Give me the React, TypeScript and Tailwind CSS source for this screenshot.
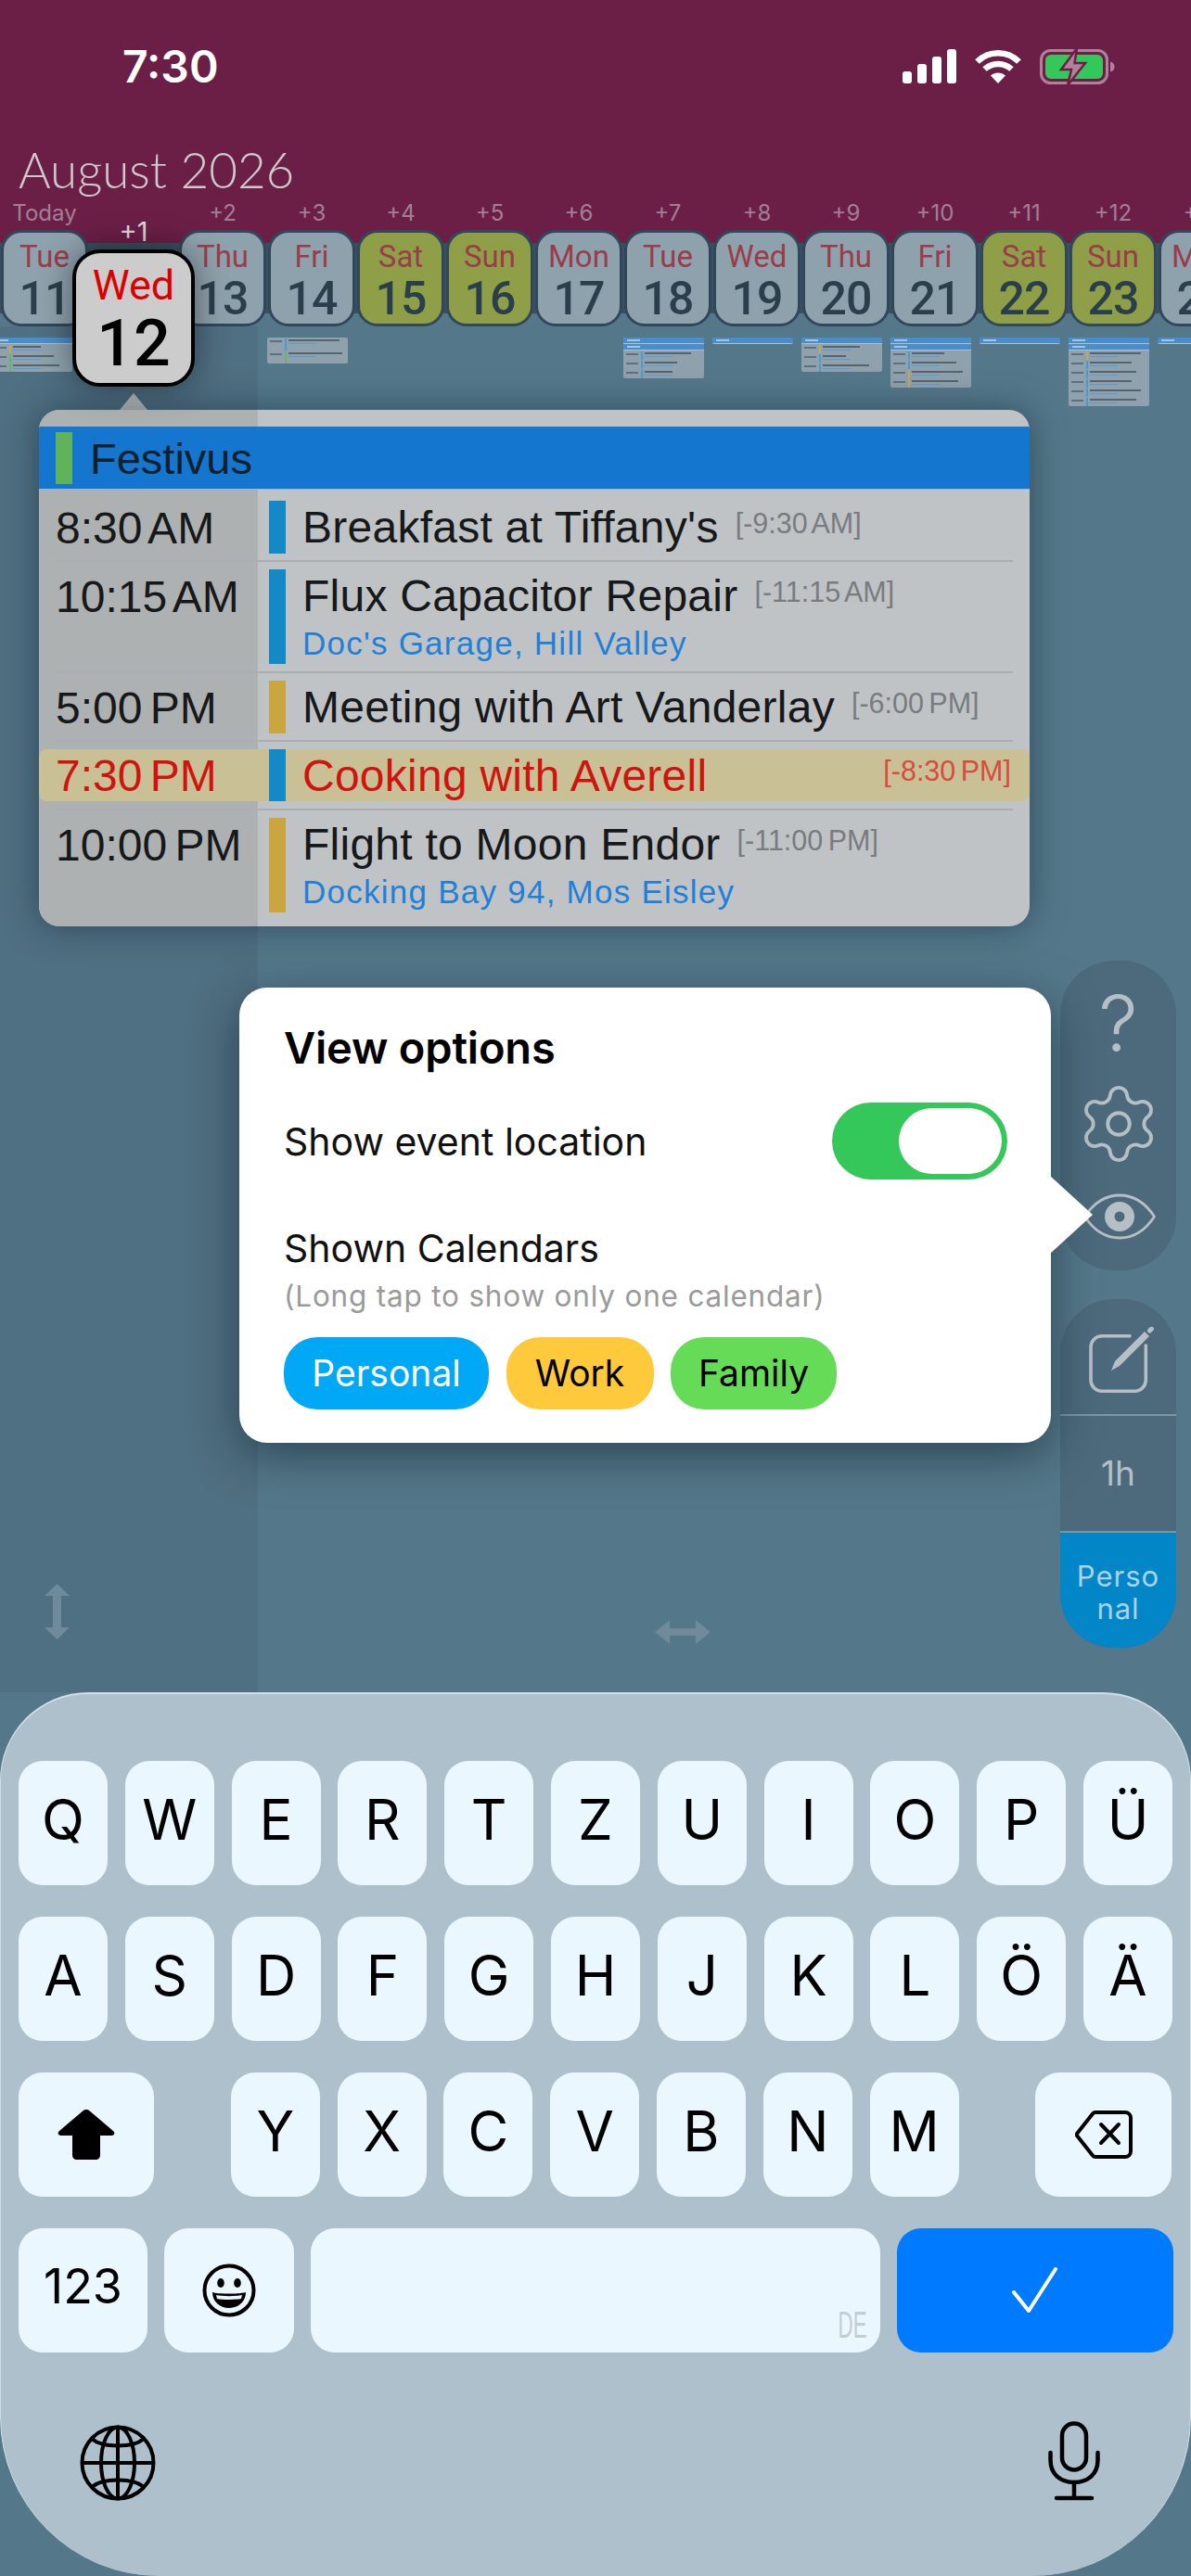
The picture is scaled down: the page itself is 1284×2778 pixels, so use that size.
import React from "react";
import { Settings } from "lucide-react";

const sans = "font-['Inter',sans-serif]";
const days = [
  { o: "Today", n: "Tue", d: 11 },
  { o: "+1", n: "Wed", d: 12, sel: true },
  { o: "+2", n: "Thu", d: 13 },
  { o: "+3", n: "Fri", d: 14 },
  { o: "+4", n: "Sat", d: 15, we: true },
  { o: "+5", n: "Sun", d: 16, we: true },
  { o: "+6", n: "Mon", d: 17 },
  { o: "+7", n: "Tue", d: 18 },
  { o: "+8", n: "Wed", d: 19 },
  { o: "+9", n: "Thu", d: 20 },
  { o: "+10", n: "Fri", d: 21 },
  { o: "+11", n: "Sat", d: 22, we: true },
  { o: "+12", n: "Sun", d: 23, we: true },
  { o: "+13", n: "Mon", d: 24 },
];

function StatusIcons() {
  return (
    <div className="flex items-center gap-[20px]">
      <svg width="58" height="37" viewBox="0 0 58 37" fill="#fff">
        <rect x="0" y="24" width="10" height="13" rx="3" />
        <rect x="16" y="16" width="10" height="21" rx="3" />
        <rect x="32" y="8" width="10" height="29" rx="3" />
        <rect x="48" y="0" width="10" height="37" rx="3" />
      </svg>
      <svg width="50" height="37" viewBox="0 0 50 37" fill="none" stroke="#fff" strokeWidth="6.5">
        <path d="M2.500 13.500C15 1 35 1 47.500 13.500" />
        <path d="M10.500 21.500C18.500 14 31.500 14 39.500 21.500" />
        <path d="M25 37L17 28.500C21.500 24.500 28.500 24.500 33 28.500Z" fill="#fff" stroke="none" />
      </svg>
      <svg width="81" height="40" viewBox="0 0 81 40">
        <rect x="1.500" y="2.500" width="71" height="35" rx="10" fill="none" stroke="#b27f9c" strokeWidth="3" />
        <rect x="6" y="7" width="62" height="26" rx="6" fill="#34c759" />
        <path d="M76 14.500c3 .7 4.500 2.700 4.500 5.500s-1.500 4.800-4.500 5.500z" fill="#b27f9c" />
        <path d="M40 0L23 23h11l-4 17 19-24H37.500z" fill="#b27f9c" stroke="#6b1f47" strokeWidth="2.500" />
      </svg>
    </div>
  );
}

function DayStrip() {
  return (
    <div className="flex gap-[2px] pl-[1px]">
      {days.map((x) => (
        <div key={x.d} className="flex w-[94px] shrink-0 flex-col items-center">
          <div className={`h-[30px] text-[24px] leading-[24px] text-[#a27f93] ${sans}`}>{x.sel ? "" : x.o}</div>
          {x.sel ? (
            <div className="relative h-[104px] w-[94px]">
              <div className={`absolute -top-[13px] left-0 w-full text-center text-[29px] leading-[30px] text-[#ddd6da] ${sans}`}>+1</div>
              <div className="absolute left-[-19px] top-[21px] z-20 flex h-[148px] w-[132px] flex-col items-center rounded-[30px] border-[4px] border-black bg-[#cccccc] shadow-[0_0_36px_rgba(0,0,0,0.45)]">
                <div className="mt-[11px] font-['Roboto',sans-serif] text-[45px] leading-[48px] text-[#dd0000]">Wed</div>
                <div className="mt-[3px] font-['Roboto',sans-serif] text-[70px] font-medium leading-[70px] text-black">12</div>
              </div>
            </div>
          ) : (
            <div className={`flex h-[104px] w-[94px] flex-col items-center rounded-[22px] border-[3px] border-[#30485a] ${x.we ? "bg-[#8f9f47]" : "bg-[#8ea2ad]"}`}>
              <div className="mt-[7px] font-['Roboto',sans-serif] text-[33px] leading-[38px] text-[#9a3d4a]">{x.n}</div>
              <div className="mt-[3px] font-['Roboto',sans-serif] text-[50px] font-medium leading-[46px] tracking-[-1px] text-[#2a3f4b]">{x.d}</div>
            </div>
          )}
        </div>
      ))}
    </div>
  );
}

function MiniCard({ x, rows, banners = 1, rowH = 10 }: { x: number; rows: [string, number][]; banners?: number; rowH?: number }) {
  return (
    <div style={{ left: x }} className="absolute top-[364px] w-[87px] overflow-hidden rounded-[2px] bg-[#8ea1ac]">
      {Array.from({ length: banners }).map((_, i) => (
        <div key={i} className="flex h-[7px] items-center border-b border-[#a9c2d6] bg-[#4a8ec9] pl-[4px]">
          <div className="h-[2px] w-[14px] bg-[#a9c4da]" />
        </div>
      ))}
      {rows.map(([c, w], i) => (
        <div key={i} style={{ height: rowH }} className="flex items-start pt-[1px]">
          <div className="ml-[3px] mt-[2px] h-[2px] w-[13px] bg-[#5f707b]" />
          <div className="ml-[3px] w-[2px]" style={{ background: c, height: rowH - 1.5 }} />
          <div className="ml-[2px] flex flex-col gap-[1.500px] pt-[1px]">
            <div className="h-[2px] bg-[#55656f]" style={{ width: w }} />
            <div className="h-[1.500px] w-[30px] bg-[#5b9bd0]" />
          </div>
        </div>
      ))}
    </div>
  );
}

const blue = "#4a9bd0";
const gold = "#c4a94e";
const grn = "#67b56c";

function EventRow(p: {
  h: string; bar: string; pt: string; time: string; title: string; tag: string; color: string; loc?: string; last?: boolean;
}) {
  return (
    <div className={`mx-[18px] flex ${p.h} ${p.pt} ${p.last ? "" : "border-b-2 border-[#aaaeb1]"}`}>
      <div className="w-[230px] shrink-0 pt-[7px] text-[48px] leading-[46px] text-[#161819] [word-spacing:-5px]">{p.time}</div>
      <div className={`w-[18px] shrink-0 ${p.bar}`} style={{ background: p.color }} />
      <div className="ml-[18px] min-w-0 pt-[2px]">
        <div className="flex items-start whitespace-nowrap">
          <span className="text-[48px] leading-[54px] tracking-[0.25px] text-[#161819]">{p.title}</span>
          <span className="ml-[18px] text-[30.5px] leading-[44px] text-[#787c80] [word-spacing:-3px]">{p.tag}</span>
        </div>
        {p.loc && <div className="mt-[3px] text-[35px] leading-[42px] tracking-[1.250px] text-[#1f80d8]">{p.loc}</div>}
      </div>
    </div>
  );
}

function EventPanel() {
  return (
    <>
      <div className="absolute left-[129px] top-[424px] z-10 h-[18px] w-[30px] bg-[#c1c5c8] [clip-path:polygon(50%_0,100%_100%,0_100%)]" />
      <div className="absolute left-[42px] top-[442px] z-10 h-[557px] w-[1068px] overflow-hidden rounded-[22px] bg-[#bfc3c6] font-['Liberation_Sans',sans-serif] shadow-[0_0_36px_rgba(20,40,55,0.55)]">
        <div className="absolute inset-y-0 left-0 w-[236px] bg-[#adb1b2]" />
        <div className="relative">
          <div className="h-[18px]" />
          <div className="flex h-[68px] items-center border-b border-[#8fb6dc] bg-[#1476cf] pl-[18px]">
            <div className="h-[56px] w-[18px] bg-[#5fb35a]" />
            <div className="ml-[19px] pt-[3px] text-[47px] leading-[54px] text-[#10202c]">Festivus</div>
          </div>
          <EventRow h="h-[78px]" pt="pt-[12px]" bar="h-[57px]" time="8:30 AM" title="Breakfast at Tiffany's" tag="[-9:30 AM]" color="#138ac6" />
          <EventRow h="h-[120px]" pt="pt-[8px]" bar="h-[102px]" time="10:15 AM" title="Flux Capacitor Repair" tag="[-11:15 AM]" color="#138ac6" loc="Doc's Garage, Hill Valley" />
          <EventRow h="h-[74px]" pt="pt-[8px]" bar="h-[57px]" time="5:00 PM" title="Meeting with Art Vanderlay" tag="[-6:00 PM]" color="#c9a640" />
          <div className="mx-[18px] h-[74px] border-b-2 border-[#aaaeb1] pt-[8px]">
            <div className="-mx-[18px] flex h-[56px] items-start rounded-[8px] bg-[#c9c195] pl-[18px] pr-[20px]">
              <div className="w-[230px] shrink-0 pt-[6px] text-[48px] leading-[46px] text-[#cf1410] [word-spacing:-5px]">7:30 PM</div>
              <div className="h-[56px] w-[18px] shrink-0 bg-[#138ac6]" />
              <div className="ml-[18px] whitespace-nowrap pt-[2px] text-[48px] leading-[54px] tracking-[0.25px] text-[#cf1410]">Cooking with Averell</div>
              <div className="ml-auto pt-[1px] text-[30.5px] leading-[44px] text-[#d84b40] [word-spacing:-3px]">[-8:30 PM]</div>
            </div>
          </div>
          <EventRow h="h-[125px]" pt="pt-[8px]" bar="h-[102px]" time="10:00 PM" title="Flight to Moon Endor" tag="[-11:00 PM]" color="#c9a640" loc="Docking Bay 94, Mos Eisley" last />
        </div>
      </div>
    </>
  );
}

function Pill({ c, label }: { c: string; label: string }) {
  return <div className={`flex h-[78px] items-center justify-center rounded-[36px] text-[39px] ${c}`}>{label}</div>;
}

function OptionsPopover() {
  return (
    <>
      <div className="absolute left-[1132px] top-[1268px] z-40 h-[84px] w-[46px] bg-white [clip-path:polygon(0_0,100%_50%,0_100%)]" />
      <div className={`absolute left-[258px] top-[1065px] z-30 h-[491px] w-[875px] rounded-[30px] bg-white pl-[48px] pr-[47px] pt-[41px] shadow-[0_14px_50px_rgba(15,30,40,0.55)] ${sans}`}>
        <div className="text-[47px] font-semibold leading-[48px] tracking-[-0.2px] text-black">View options</div>
        <div className="mt-[35px] flex h-[83px] items-center justify-between">
          <div className="text-[41px] leading-[48px] text-[#111]">Show event location</div>
          <div className="flex h-[83px] w-[189px] items-center justify-end rounded-full bg-[#34c759] pr-[6px]">
            <div className="h-[71px] w-[111px] rounded-full bg-white" />
          </div>
        </div>
        <div className="mt-[50px] text-[41px] leading-[48px] text-[#111]">Shown Calendars</div>
        <div className="mt-[8px] text-[31.5px] leading-[40px] tracking-[0.8px] text-[#9a9a9a]">(Long tap to show only one calendar)</div>
        <div className="mt-[24px] flex gap-[18.5px]">
          <Pill c="w-[221px] bg-[#00a8f5] text-white" label="Personal" />
          <Pill c="w-[159px] bg-[#ffc93c] text-black" label="Work" />
          <Pill c="w-[179px] bg-[#66db57] text-black" label="Family" />
        </div>
      </div>
    </>
  );
}

function SideRail() {
  return (
    <div className={`absolute left-[1143px] top-[1036px] z-20 flex w-[125px] flex-col gap-[31px] text-[#b5bfc5] ${sans}`}>
      <div className="flex h-[334px] flex-col items-center rounded-[58px] bg-[#4c6a7c] pt-[28px]">
        <div className="h-[80px] text-[84px] font-light leading-[80px]">?</div>
        <Settings size={94} strokeWidth={1} className="mt-[21px]" />
        <svg width="78" height="50" viewBox="0 0 78 50" className="mt-[28px] ml-[2px]" fill="none">
          <path d="M1.500 25C12 9 25 2 39 2s27 7 37.500 23C66 41 53 48 39 48S12 41 1.500 25Z" stroke="currentColor" strokeWidth="2.800" strokeLinejoin="round" />
          <circle cx="39" cy="25" r="16" fill="currentColor" />
          <circle cx="39" cy="25" r="5.500" fill="#4c6a7c" />
        </svg>
      </div>
      <div className="flex h-[376px] flex-col overflow-hidden rounded-[58px] bg-[#4c6a7c]">
        <div className="flex h-[126px] items-start justify-center border-b-2 border-[#7d94a2] pl-[8px] pt-[30px]">
          <svg width="72" height="72" viewBox="0 0 72 72" fill="none" stroke="currentColor" strokeWidth="3.600" strokeLinecap="round">
            <path d="M44 9.700H14a12 12 0 0 0-12 12V57.300a12 12 0 0 0 12 12H49.300a12 12 0 0 0 12-12V20" />
            <path d="M24 47L28 37 60 5 65 10 33 42Z" fill="currentColor" stroke="none" />
            <path d="M65.500 4L67.500 2" strokeWidth="5" />
          </svg>
        </div>
        <div className="flex h-[126px] items-center justify-center border-b-2 border-[#7d94a2] text-[37px]">1h</div>
        <div className="flex flex-1 items-center justify-center bg-[#0286c8] pt-[3px] text-center text-[31px] leading-[35px] tracking-[1px] text-[#a8d3e8]">
          Perso<br />nal
        </div>
      </div>
    </div>
  );
}

function ResizeH() {
  return (
    <svg width="60" height="26" viewBox="0 0 60 26" fill="#6f8a9a">
      <path d="M0 13L16 0V9H44V0L60 13 44 26V17H16V26Z" />
    </svg>
  );
}
function ResizeV() {
  return (
    <svg width="27" height="60" viewBox="0 0 27 60" fill="#6f8a9a">
      <path d="M13.500 0L27 13H18V47H27L13.500 60 0 47H9V13H0Z" />
    </svg>
  );
}

function Key({ children, w = "w-[96px]", bg = "bg-[#ebf7ff]" }: { children?: React.ReactNode; w?: string; bg?: string }) {
  return (
    <div className={`flex h-[134px] shrink-0 items-center justify-center rounded-[26px] pb-[8px] font-['Inter',sans-serif] text-[60px] text-black ${w} ${bg}`}>
      {children}
    </div>
  );
}

function Keyboard() {
  const row1 = ["Q", "W", "E", "R", "T", "Z", "U", "I", "O", "P", "Ü"];
  const row2 = ["A", "S", "D", "F", "G", "H", "J", "K", "L", "Ö", "Ä"];
  const row3 = ["Y", "X", "C", "V", "B", "N", "M"];
  return (
    <div className="relative h-[953px] rounded-t-[95px] rounded-b-[172px] border-x border-t-2 border-[#cfe0e8] bg-[#adc0cc] pt-[72px]">
      <div className="flex gap-[18.8px] pl-[19px]">{row1.map((k) => <Key key={k}>{k}</Key>)}</div>
      <div className="mt-[34px] flex gap-[18.8px] pl-[19px]">{row2.map((k) => <Key key={k}>{k}</Key>)}</div>
      <div className="mt-[34px] flex gap-[18.8px] pl-[19px]">
        <Key w="w-[146px] mr-[64px]">
          <svg width="62" height="54" viewBox="0 0 62 54" fill="#000" className="mt-[8px]">
            <path d="M31 0c1.500 0 2.800.6 4 1.700L60 23c2.500 2.200 1.500 5-2 5H46v21c0 3-2 5-5 5H21c-3 0-5-2-5-5V28H4c-3.500 0-4.500-2.800-2-5L27 1.700C28.200.6 29.500 0 31 0z" />
          </svg>
        </Key>
        {row3.map((k) => <Key key={k}>{k}</Key>)}
        <Key w="w-[147px] ml-[64px]">
          <svg width="62" height="52" viewBox="0 0 62 52" fill="none" stroke="#000" strokeWidth="4" strokeLinecap="round" strokeLinejoin="round" className="mt-[8px]">
            <path d="M22 2H54a6 6 0 0 1 6 6V44a6 6 0 0 1-6 6H22a4 4 0 0 1-3-1.500L2 27a2 2 0 0 1 0-2L19 3.500A4 4 0 0 1 22 2Z" />
            <path d="M28 15L47 35M47 15L28 35" />
          </svg>
        </Key>
      </div>
      <div className="mt-[34px] flex gap-[18px] pl-[19px]">
        <Key w="w-[139px]"><span className="text-[52px]">123</span></Key>
        <Key w="w-[140px]">
          <svg width="58" height="58" viewBox="0 0 58 58" className="mt-[8px]">
            <circle cx="29" cy="29" r="26.500" fill="none" stroke="#000" strokeWidth="4" />
            <ellipse cx="20" cy="21" rx="3.800" ry="5" />
            <ellipse cx="38" cy="21" rx="3.800" ry="5" />
            <path d="M11 31c5 2 31 2 36 0 0 10-8 17-18 17S11 41 11 31z" />
            <path d="M15 34c6 1.500 22 1.500 28 0l-1 4c-6 1.300-20 1.300-26 0z" fill="#ebf7ff" />
          </svg>
        </Key>
        <Key w="w-[614px] relative">
          <span className="absolute bottom-[11px] right-[14px] inline-block origin-right scale-x-[0.56] font-['Liberation_Sans',sans-serif] text-[40px] leading-[38px] text-[#c5ccd2]">DE</span>
        </Key>
        <Key w="w-[298px]" bg="bg-[#007aff]">
          <svg width="50" height="50" viewBox="0 0 50 50" fill="none" stroke="#fff" strokeWidth="4" strokeLinecap="round" strokeLinejoin="round" className="mt-[8px]">
            <path d="M2 27L18 47 47 2" />
          </svg>
        </Key>
      </div>
      <div className="mt-[78px] flex items-start justify-between pl-[85px] pr-[97px]">
        <svg width="82" height="82" viewBox="0 0 82 82" fill="none" stroke="#000" strokeWidth="4">
          <circle cx="41" cy="41" r="38.500" />
          <ellipse cx="41" cy="41" rx="18" ry="38.500" />
          <path d="M41 2.500V79.500M2.500 41H79.500" />
          <path d="M13 15C24 25 58 25 69 15M13 67C24 57 58 57 69 67" />
        </svg>
        <svg width="56" height="86" viewBox="0 0 56 86" fill="none" stroke="#000" strokeWidth="4.500" strokeLinecap="round" className="-mt-[4px]">
          <rect x="15" y="2.500" width="26" height="50" rx="13" />
          <path d="M2.500 34V42C2.500 57 13 66 28 66S53.500 57 53.500 42V34" />
          <path d="M28 66V83M9 83H47" />
        </svg>
      </div>
    </div>
  );
}

export default function App() {
  return (
    <div className="relative flex h-[2778px] w-[1284px] flex-col overflow-hidden bg-[#54788a]">
      <header className="h-[352px] shrink-0 bg-[linear-gradient(#6b1f47_0,#6b1f47_262px,#3a5060_262px,#3a5060_338px,#54788a_338px)]">
        <div className="flex h-[145px] items-center justify-between pb-[2px] pl-[132px] pr-[82px]">
          <div className={`text-[48px] font-semibold leading-none text-white ${sans}`}>7:30</div>
          <StatusIcons />
        </div>
        <div className="h-[73px] pl-[20px] font-['Lato',sans-serif] text-[53px] font-light leading-[76px] text-[#cfc8cc]">August 2026</div>
        <DayStrip />
      </header>
      <div className="flex min-h-0 flex-1">
        <div className="relative w-[278px] shrink-0 bg-[#4f6f82]">
          <div className="absolute left-[48px] top-[1356px]"><ResizeV /></div>
        </div>
        <div className="relative flex-1">
          <div className="absolute left-[428px] top-[1395px]"><ResizeH /></div>
        </div>
      </div>
      <Keyboard />
      <MiniCard x={-9} banners={1} rows={[[gold, 30], [grn, 44], [grn, 50]]} />
      <MiniCard x={288} banners={0} rowH={14} rows={[[blue, 55], [grn, 58]]} />
      <MiniCard x={672} banners={2} rows={[[blue, 50], [blue, 35], [blue, 30]]} />
      <MiniCard x={768} rows={[]} />
      <MiniCard x={864} rows={[[gold, 40], [blue, 25], [blue, 50]]} />
      <MiniCard x={960} banners={2} rows={[[blue, 35], [blue, 48], [gold, 55], [gold, 50]]} />
      <MiniCard x={1056} rows={[]} />
      <MiniCard x={1152} banners={2} rows={[[gold, 55], [blue, 45], [blue, 50], [blue, 45], [blue, 55], [blue, 50]]} />
      <MiniCard x={1248} rows={[]} />
      <EventPanel />
      <SideRail />
      <OptionsPopover />
    </div>
  );
}
